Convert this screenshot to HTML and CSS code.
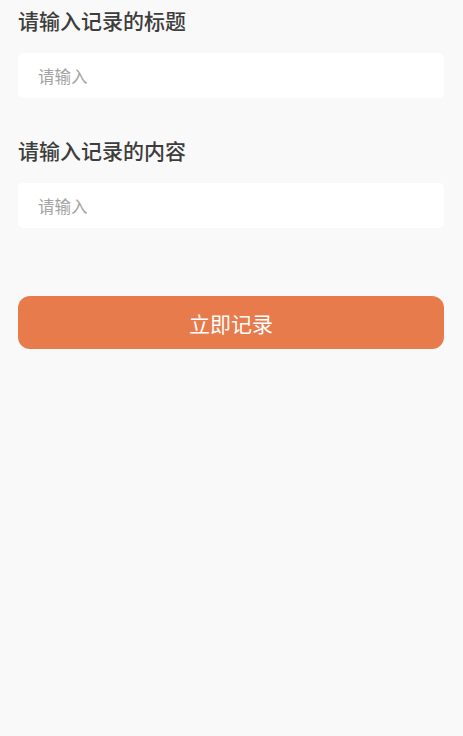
FILE: index.html
```html
<!DOCTYPE html>
<html lang="zh-CN">
<head>
    <meta charset="UTF-8">
    <meta name="viewport" content="width=device-width, initial-scale=1.0">
    <title>记录</title>
    <link rel="stylesheet" href="styles.css">
</head>
<body>

<div class="page">
    <div class="field">
        <div class="label">请输入记录的标题</div>
        <input type="text" class="input" placeholder="请输入">
    </div>
    <div class="field">
        <div class="label">请输入记录的内容</div>
        <input type="text" class="input" placeholder="请输入">
    </div>
    <button class="submit">立即记录</button>
</div>

</body>
</html>
```

FILE: styles.css
```css
* {
    margin: 0;
    padding: 0;
    box-sizing: border-box;
    font-family: "Noto Sans CJK SC", "Noto Sans", sans-serif;
}

body {
    background-color: #f9f9f9;
    min-height: 100vh;
}

.page {
    padding: 8px 19px 0 18px;
    display: flex;
    flex-direction: column;
}

.field {
    display: flex;
    flex-direction: column;
    margin-bottom: 40px;
}

.label {
    font-size: 21px;
    line-height: 24px;
    font-weight: 500;
    color: #3d3d3d;
    margin-bottom: 21px;
}

.input {
    height: 45px;
    width: 100%;
    border: none;
    border-radius: 5px;
    background-color: #fff;
    padding: 0 20px;
    font-size: 16.5px;
    color: #333;
    outline: none;
}

.input::placeholder {
    color: #a3a3a3;
}

.submit {
    margin-top: 28px;
    height: 53px;
    width: 100%;
    border: none;
    border-radius: 12px;
    background-color: #e87b4c;
    color: #fff;
    font-size: 21px;
    cursor: pointer;
}
```
